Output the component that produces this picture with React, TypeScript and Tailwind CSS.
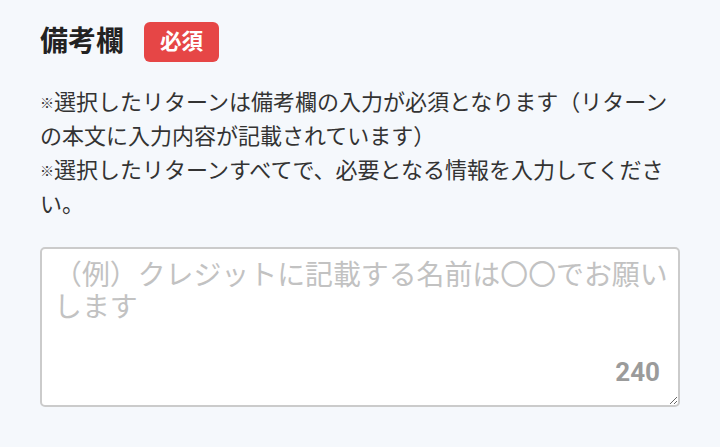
import { useState } from "react";

const Mark = () => (
  <span className="inline-block align-top text-[14px] leading-[34px]">※</span>
);

const App = () => {
  const [note, setNote] = useState("");

  return (
    <div
      className="min-h-[447px] w-full bg-[#f5f8fc] px-10 pt-[22px]"
      style={{ fontFamily: 'Roboto, "Noto Sans CJK JP", sans-serif' }}
    >
      <div className="flex items-center">
        <h2 className="text-[28px] font-bold leading-[40px] text-[#222]">
          備考欄
        </h2>
        <span className="ml-5 flex h-10 items-center rounded-[6px] bg-[#e64646] px-4 text-[21.6px] font-bold text-white">
          必須
        </span>
      </div>

      <p className="mt-[24px] text-[22px] leading-[34px] text-[#333]">
        <Mark />
        選択したリターンは備考欄の入力が必須となります（リターンの本文に入力内容が記載されています）
        <br />
        <Mark />
        選択したリターンすべてで、必要となる情報を入力してください。
      </p>

      <div className="relative mt-[25px]">
        <textarea
          value={note}
          onChange={(e) => setNote(e.target.value)}
          maxLength={240}
          placeholder="（例）クレジットに記載する名前は〇〇でお願いします"
          className="block h-[160px] w-full rounded-[5px] border-2 border-[#cbcbcb] bg-white pt-[11px] pr-[8px] pl-[12px] text-[27.9px] leading-[32px] text-[#333] outline-none placeholder:text-[#c2c2c2]"
        />
        <span className="absolute right-[20px] bottom-[20px] text-[26px] font-bold leading-[30px] text-[#9b9b9b]">
          {240 - note.length}
        </span>
      </div>
    </div>
  );
};

export default App;
